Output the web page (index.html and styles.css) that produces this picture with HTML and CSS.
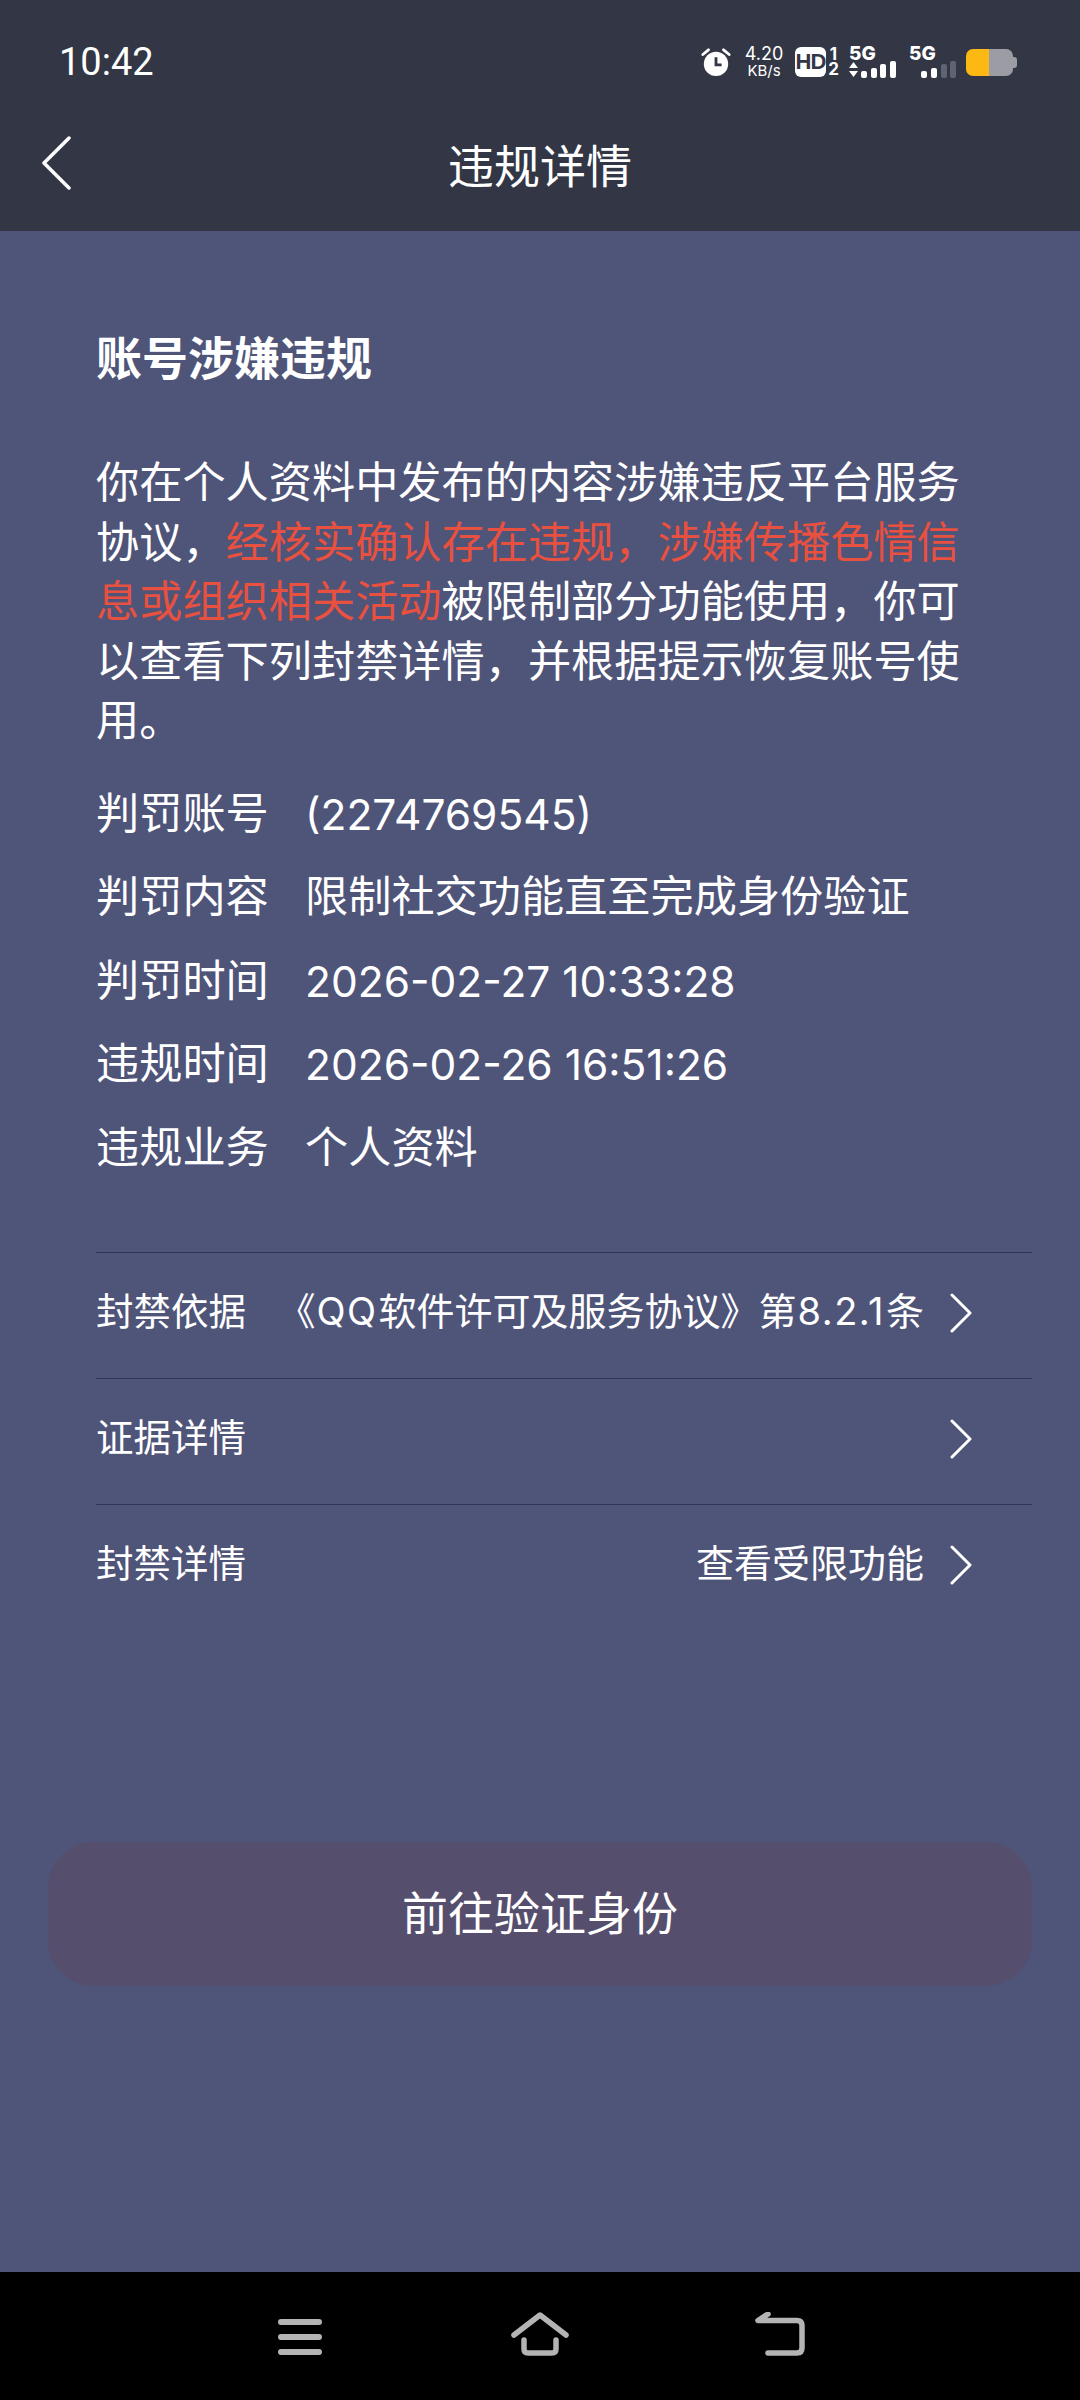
FILE: index.html
```html
<!DOCTYPE html>
<html lang="zh-CN">
<head>
    <meta charset="UTF-8">
    <meta name="viewport" content="width=device-width, initial-scale=1.0">
    <title>违规详情</title>
    <link rel="stylesheet" href="styles.css">
</head>
<body>
    <header class="top">
        <div class="status-bar">
            <span class="time">10:42</span>
            <div class="status-icons">
                <svg class="alarm" viewBox="0 0 32 32">
                    <circle cx="16" cy="18" r="13" fill="#fff"/>
                    <path d="M16 11v8h6" fill="none" stroke="#333745" stroke-width="3"/>
                    <path d="M2 8l6-5M30 8l-6-5" fill="none" stroke="#fff" stroke-width="3" stroke-linecap="round"/>
                </svg>
                <div class="speed"><span>4.20</span><span class="speed-unit">KB/s</span></div>
                <div class="hd">
                    <span class="hd-box">HD</span>
                    <div class="hd-nums"><span>1</span><span>2</span></div>
                </div>
                <div class="sim">
                    <span class="sim-label">5G</span>
                    <svg class="sim-bars" viewBox="0 0 48 17">
                        <path d="M0 7l4.500-6 4.500 6zM0 10h9l-4.500 6z" fill="#fff"/>
                        <rect x="12" y="10" width="6" height="7" rx="2" fill="#fff"/>
                        <rect x="22" y="7" width="6" height="10" rx="2" fill="#fff"/>
                        <rect x="31" y="3" width="6" height="14" rx="2" fill="#fff"/>
                        <rect x="41" y="0" width="6" height="17" rx="2" fill="#fff"/>
                    </svg>
                </div>
                <div class="sim sim-second">
                    <span class="sim-label">5G</span>
                    <svg class="sim-bars" viewBox="0 0 48 17">
                        <rect x="12" y="10" width="6" height="7" rx="2" fill="#fff"/>
                        <rect x="22" y="7" width="6" height="10" rx="2" fill="#fff"/>
                        <rect x="32" y="3" width="6" height="14" rx="2" fill="#5f6473"/>
                        <rect x="41" y="0" width="6" height="17" rx="2" fill="#5f6473"/>
                    </svg>
                </div>
                <div class="battery"></div>
            </div>
        </div>
        <div class="nav-bar">
            <svg class="nav-back" viewBox="0 0 30 54">
                <path d="M28 2L3 27l25 25" fill="none" stroke="#fff" stroke-width="3.500" stroke-linecap="round" stroke-linejoin="round"/>
            </svg>
            <h1 class="nav-title">违规详情</h1>
        </div>
    </header>

    <main class="content">
        <h2 class="heading">账号涉嫌违规</h2>
        <p class="notice">你在个人资料中发布的内容涉嫌违反平台服务协议，<span class="warn">经核实确认存在违规，涉嫌传播色情信息或组织相关活动</span>被限制部分功能使用，你可以查看下列封禁详情，并根据提示恢复账号使用。</p>

        <div class="info">
            <div class="info-row"><span class="info-label">判罚账号</span><span class="num">(2274769545)</span></div>
            <div class="info-row"><span class="info-label">判罚内容</span><span>限制社交功能直至完成身份验证</span></div>
            <div class="info-row"><span class="info-label">判罚时间</span><span class="num">2026-02-27 10:33:28</span></div>
            <div class="info-row"><span class="info-label">违规时间</span><span class="num">2026-02-26 16:51:26</span></div>
            <div class="info-row"><span class="info-label">违规业务</span><span>个人资料</span></div>
        </div>

        <div class="links">
            <div class="link-row">
                <span>封禁依据</span>
                <span class="link-value">《<span class="num-small">QQ</span>软件许可及服务协议》第<span class="num-small">8.2.1</span>条</span>
                <svg class="chevron" viewBox="0 0 22 40"><path d="M2 2l18 18L2 38" fill="none" stroke="#fff" stroke-width="3" stroke-linecap="round" stroke-linejoin="round"/></svg>
            </div>
            <div class="link-row">
                <span>证据详情</span>
                <span class="link-value"></span>
                <svg class="chevron" viewBox="0 0 22 40"><path d="M2 2l18 18L2 38" fill="none" stroke="#fff" stroke-width="3" stroke-linecap="round" stroke-linejoin="round"/></svg>
            </div>
            <div class="link-row">
                <span>封禁详情</span>
                <span class="link-value">查看受限功能</span>
                <svg class="chevron" viewBox="0 0 22 40"><path d="M2 2l18 18L2 38" fill="none" stroke="#fff" stroke-width="3" stroke-linecap="round" stroke-linejoin="round"/></svg>
            </div>
        </div>

        <button class="verify-btn">前往验证身份</button>
    </main>

    <footer class="system-nav">
        <svg class="sys-icon" viewBox="0 0 44 36">
            <path d="M3 3h38M3 18h38M3 33h38" fill="none" stroke="#b4b4b4" stroke-width="6" stroke-linecap="round"/>
        </svg>
        <svg class="sys-icon" viewBox="0 0 58 44">
            <path d="M3 23L29 3l26 20" fill="none" stroke="#b4b4b4" stroke-width="5.500" stroke-linecap="round" stroke-linejoin="round"/>
            <path d="M13 28v9q0 4 4 4h24q4 0 4-4v-9" fill="none" stroke="#b4b4b4" stroke-width="5.500" stroke-linecap="round"/>
        </svg>
        <svg class="sys-icon" viewBox="0 0 50 44">
            <path d="M13 2L3 8.500h39q5 0 5 5V36q0 5-5 5H13" fill="none" stroke="#b4b4b4" stroke-width="5.500" stroke-linecap="round" stroke-linejoin="round"/>
        </svg>
    </footer>
</body>
</html>
```

FILE: styles.css
```css
:root {
    --bg-header: #333745;
    --bg-page: #4f5479;
    --line: #2f3458;
    --red: #e8503f;
}
* {
    box-sizing: border-box;
    margin: 0;
    padding: 0;
}
body {
    display: flex;
    flex-direction: column;
    width: 1080px;
    height: 2400px;
    overflow: hidden;
    background-color: var(--bg-page);
    color: #fff;
    font-family: Roboto, "Noto Sans CJK SC", sans-serif;
    text-spacing-trim: space-all;
}

/* top bars */
.top {
    height: 231px;
    background-color: var(--bg-header);
}
.status-bar {
    display: flex;
    align-items: center;
    height: 100px;
    padding: 24px 60px 0 59px;
}
.time {
    font-size: 38px;
    line-height: 46px;
}
.status-icons {
    display: flex;
    align-items: center;
    margin-left: auto;
}
.alarm {
    width: 30px;
    height: 30px;
}
.speed {
    display: flex;
    flex-direction: column;
    align-items: center;
    width: 42px;
    margin-left: 12px;
    font-family: Inter, sans-serif;
    font-size: 18px;
    line-height: 17px;
}
.speed-unit {
    font-size: 15px;
}
.hd {
    display: flex;
    align-items: center;
    margin-left: 10px;
}
.hd-box {
    width: 31px;
    height: 30px;
    border-radius: 6px;
    background-color: #fff;
    color: var(--bg-header);
    font-family: "Liberation Sans", sans-serif;
    font-size: 22px;
    font-weight: 700;
    line-height: 30px;
    text-align: center;
    letter-spacing: -1px;
}
.hd-nums {
    display: flex;
    flex-direction: column;
    align-items: center;
    width: 11px;
    margin-left: 2px;
    font-family: Inter, sans-serif;
    font-size: 17px;
    font-weight: 700;
    line-height: 15px;
}
.sim {
    display: flex;
    flex-direction: column;
    width: 48px;
    margin-left: 10px;
}
.sim-second {
    margin-left: 12px;
}
.sim-label {
    font-family: Inter, sans-serif;
    font-size: 19px;
    font-weight: 800;
    line-height: 14px;
}
.sim-bars {
    width: 48px;
    height: 17px;
}
.battery {
    position: relative;
    width: 47px;
    height: 27px;
    margin-left: 9px;
    margin-right: 7px;
    border-radius: 7px;
    background: linear-gradient(to right, #fdb913 0 49%, #9c9da4 49%);
}
.battery::after {
    content: "";
    position: absolute;
    top: 8px;
    right: -4px;
    width: 4px;
    height: 11px;
    border-radius: 0 3px 3px 0;
    background-color: #9c9da4;
}
.nav-bar {
    display: flex;
    align-items: center;
    justify-content: center;
    position: relative;
    height: 131px;
}
.nav-back {
    position: absolute;
    left: 41px;
    top: 36px;
    width: 30px;
    height: 54px;
}
.nav-title {
    margin-top: 2px;
    font-size: 46px;
    font-weight: 400;
    line-height: 60px;
}

/* main */
.content {
    flex: 1;
    padding: 98px 48px 0 96px;
}
.heading {
    font-size: 46px;
    font-weight: 700;
    line-height: 60px;
}
.notice {
    width: 880px;
    margin-top: 65px;
    font-size: 43.2px;
    line-height: 59.6px;
}
.warn {
    color: var(--red);
}
.info {
    margin-top: 21px;
    font-size: 43.2px;
}
.info-row {
    display: flex;
    align-items: center;
    height: 83.500px;
    line-height: 60px;
}
.info-label {
    width: 209px;
}
.num {
    font-family: Inter, sans-serif;
    font-size: 42.500px;
    font-weight: 400;
}
.links {
    margin-top: 62px;
    font-size: 37.500px;
}
.link-row {
    display: flex;
    align-items: center;
    height: 126px;
    padding-right: 60px;
    padding-bottom: 14px;
    border-top: 1px solid var(--line);
}
.link-value {
    margin-left: auto;
    font-size: 38px;
}
.num-small {
    margin: 0 1px;
    font-family: Inter, sans-serif;
    letter-spacing: 1.500px;
}
.chevron {
    width: 22px;
    height: 40px;
    margin-top: 8px;
    margin-left: 26px;
}
.verify-btn {
    display: block;
    width: 984px;
    height: 144px;
    margin-top: 212px;
    margin-left: -48px;
    padding-bottom: 8px;
    border: none;
    border-radius: 46px;
    background-color: #554e6d;
    color: #fff;
    font-family: "Noto Sans CJK SC", sans-serif;
    font-size: 46px;
}

/* android nav */
.system-nav {
    position: relative;
    height: 128px;
    background-color: #000;
}
.sys-icon {
    position: absolute;
    top: 40px;
    height: 44px;
}
.sys-icon:nth-child(1) {
    left: 278px;
    top: 47px;
    width: 44px;
    height: 36px;
}
.sys-icon:nth-child(2) {
    left: 511px;
    width: 58px;
}
.sys-icon:nth-child(3) {
    left: 755px;
    width: 50px;
}
```
